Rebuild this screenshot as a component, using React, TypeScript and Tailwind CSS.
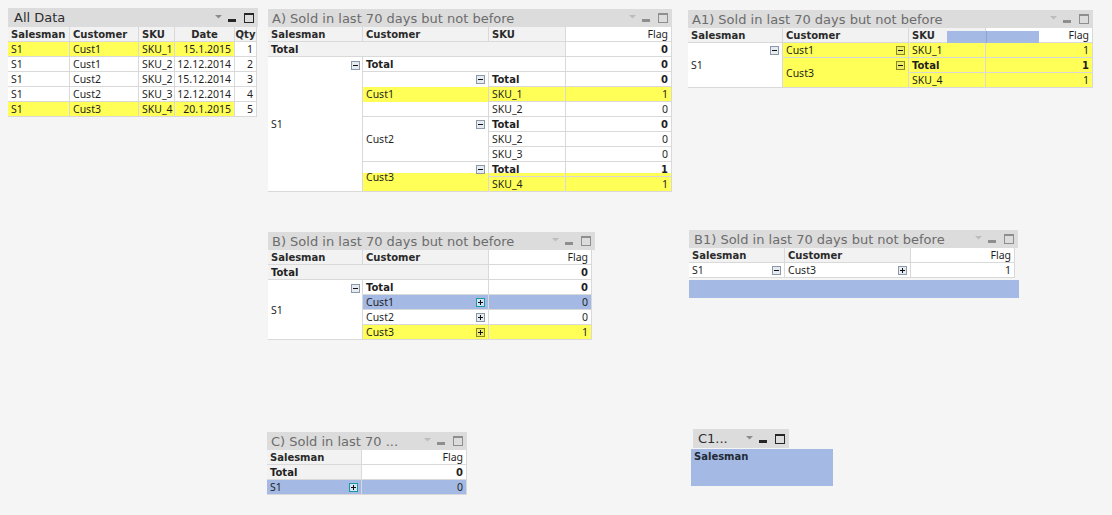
import React from "react";

type Tone = "n" | "t" | "y";

function Toggle({ plus = false, tone = "n" }: { plus?: boolean; tone?: Tone }) {
  const s = tone === "t" ? "#1c98a3" : tone === "y" ? "#8a8a1c" : "#8a98aa";
  const f = tone === "t" ? "#d3e3f3" : tone === "y" ? "#ecec6a" : "#e6ebf1";
  return (
    <svg width="9" height="9" viewBox="0 0 9 9" className="shrink-0">
      <rect x="0.5" y="0.5" width="8" height="8" fill={f} stroke={s} />
      <path d="M2 4.5H7" stroke="#111" />
      {plus && <path d="M4.5 2V7" stroke="#111" />}
    </svg>
  );
}

function CapIcons({ active = false }: { active?: boolean }) {
  const t = active ? "#8c8c8c" : "#bcbcbc";
  const d = active ? "#262626" : "#8e8e8e";
  return (
    <svg width="40" height="10" viewBox="0 0 40 10" className="shrink-0">
      <path d="M0 2H7L3.5 5.5Z" fill={t} />
      <rect x="13" y="6" width="8" height="3" fill={d} />
      <rect x="29.5" y="0.5" width="9" height="9" fill="none" stroke={d} />
      <rect x="29" y="0" width="10" height="2" fill={d} />
    </svg>
  );
}

function Caption({ title, active = false, className = "" }: { title: string; active?: boolean; className?: string }) {
  return (
    <div className={`flex items-center bg-[#dcdcdc] pr-[3px] ${className}`}>
      <span className={`text-[13px] leading-none whitespace-nowrap ${active ? "text-[#2e2e2e]" : "text-[#6c6c6c]"}`}>{title}</span>
      <div className="flex-1" />
      <CapIcons active={active} />
    </div>
  );
}

const REG = "font-['Noto_Sans',sans-serif] text-[10.5px] font-normal";
const BOLD = "font-['DejaVu_Sans',sans-serif] text-[10px] font-bold";

function C({
  children,
  h = false,
  b = false,
  r = false,
  c = false,
  className = "",
}: {
  children?: React.ReactNode;
  h?: boolean;
  b?: boolean;
  r?: boolean;
  c?: boolean;
  className?: string;
}) {
  return (
    <div
      className={`border-r border-b border-[#d9d9d9] px-[3px] pt-[1px] flex items-center whitespace-nowrap overflow-hidden leading-[13px] ${
        h || b ? BOLD : REG
      } ${h ? "bg-[#f2f2f2] text-[#2a2a2a]" : "text-[#1f1f1f]"} ${r ? "justify-end" : c ? "justify-center" : ""} ${className}`}
    >
      {children}
    </div>
  );
}

const Y = "bg-[#ffff58]";
const W = "bg-white";
const BL = "bg-[#a4b9e3]";
const GRAD = "bg-[linear-gradient(to_bottom,#fff_11px,#ffff58_11px)]";

function AllData() {
  const rows: [string, string, string, string, string, boolean][] = [
    ["S1", "Cust1", "SKU_1", "15.1.2015", "1", true],
    ["S1", "Cust1", "SKU_2", "12.12.2014", "2", false],
    ["S1", "Cust2", "SKU_2", "15.12.2014", "3", false],
    ["S1", "Cust2", "SKU_3", "12.12.2014", "4", false],
    ["S1", "Cust3", "SKU_4", "20.1.2015", "5", true],
  ];
  return (
    <div className="absolute left-[8px] top-[8px] w-[250px]">
      <Caption title="All Data" active className="h-[19px] pl-[6px]" />
      <div className="grid grid-cols-[62px_69px_36px_60px_22px] auto-rows-[15px]">
        <C h>Salesman</C>
        <C h>Customer</C>
        <C h className="px-[2px]">SKU</C>
        <C h c>Date</C>
        <C h c className="px-0">Qty</C>
        {rows.map((rw, i) => (
          <React.Fragment key={i}>
            <C className={rw[5] ? Y : W}>{rw[0]}</C>
            <C className={rw[5] ? Y : W}>{rw[1]}</C>
            <C className={`px-[2px] ${rw[5] ? Y : W}`}>{rw[2]}</C>
            <C r className={`px-[2px] ${rw[5] ? Y : W}`}>{rw[3]}</C>
            <C r className={`px-[2px] ${W}`}>{rw[4]}</C>
          </React.Fragment>
        ))}
      </div>
    </div>
  );
}

function TableA() {
  return (
    <div className="absolute left-[268px] top-[9px] w-[404px]">
      <Caption title="A) Sold in last 70 days but not before" className="h-[18px] pl-[4px]" />
      <div className="grid grid-cols-[95px_126px_77px_106px] grid-rows-[repeat(11,15px)]">
        <C h>Salesman</C>
        <C h>Customer</C>
        <C h>SKU</C>
        <C r className={W}>Flag</C>

        <C b className="col-span-3 bg-[#f2f2f2]">Total</C>
        <C b r className={W}>0</C>

        <C className={`row-span-9 relative ${W}`}>
          <span className="absolute right-[2px] top-[4px] flex">
            <Toggle />
          </span>
          S1
        </C>
        <C b className={`col-span-2 ${W}`}>Total</C>
        <C b r className={W}>0</C>

        <div className={`row-span-3 flex flex-col border-r border-b border-[#d9d9d9] text-[#1f1f1f] ${REG} ${W}`}>
          <div className="h-[15px] flex items-center justify-end pr-[3px]">
            <Toggle />
          </div>
          <div className={`h-[15px] flex items-center px-[3px] pt-[1px] ${Y}`}>Cust1</div>
          <div className="flex-1" />
        </div>
        <C b className={W}>Total</C>
        <C b r className={W}>0</C>
        <C className={Y}>SKU_1</C>
        <C r className={Y}>1</C>
        <C className={W}>SKU_2</C>
        <C r className={W}>0</C>

        <C className={`row-span-3 relative ${W}`}>
          <span className="absolute right-[3px] top-[3px] flex">
            <Toggle />
          </span>
          Cust2
        </C>
        <C b className={W}>Total</C>
        <C b r className={W}>0</C>
        <C className={W}>SKU_2</C>
        <C r className={W}>0</C>
        <C className={W}>SKU_3</C>
        <C r className={W}>0</C>

        <C className={`row-span-2 relative ${GRAD}`}>
          <span className="absolute right-[3px] top-[3px] flex">
            <Toggle />
          </span>
          Cust3
        </C>
        <C b className={GRAD}>Total</C>
        <C b r className={GRAD}>1</C>
        <C className={Y}>SKU_4</C>
        <C r className={Y}>1</C>
      </div>
    </div>
  );
}

function TableA1() {
  return (
    <div className="absolute left-[688px] top-[10px] w-[405px]">
      <Caption title="A1) Sold in last 70 days but not before" className="h-[18px] pl-[4px]" />
      <div className="relative grid grid-cols-[95px_126px_77px_107px] grid-rows-[repeat(4,15px)]">
        <C h>Salesman</C>
        <C h>Customer</C>
        <C h>SKU</C>
        <C r className={W}>Flag</C>

        <C className={`row-span-3 relative ${W}`}>
          <span className="absolute right-[3px] top-[3px] flex">
            <Toggle />
          </span>
          S1
        </C>
        <C className={`justify-between ${Y}`}>
          Cust1
          <Toggle tone="y" />
        </C>
        <C className={Y}>SKU_1</C>
        <C r className={Y}>1</C>

        <C className={`row-span-2 relative ${Y}`}>
          <span className="absolute right-[3px] top-[3px] flex">
            <Toggle tone="y" />
          </span>
          Cust3
        </C>
        <C b className={Y}>Total</C>
        <C b r className={Y}>1</C>
        <C className={Y}>SKU_4</C>
        <C r className={Y}>1</C>

        <div className={`absolute left-[259px] top-[3px] w-[92px] h-[12px] ${BL}`}>
          <div className="absolute left-[39px] top-0 w-[1px] h-full bg-[#8ea3cf]" />
        </div>
      </div>
    </div>
  );
}

function TableB() {
  return (
    <div className="absolute left-[268px] top-[232px] w-[327px]">
      <Caption title="B) Sold in last 70 days but not before" className="h-[18px] pl-[4px]" />
      <div className="grid grid-cols-[95px_126px_103px] grid-rows-[repeat(6,15px)]">
        <C h>Salesman</C>
        <C h>Customer</C>
        <C r className={W}>Flag</C>

        <C b className="col-span-2 bg-[#f2f2f2]">Total</C>
        <C b r className={W}>0</C>

        <C className={`row-span-4 relative ${W}`}>
          <span className="absolute right-[2px] top-[4px] flex">
            <Toggle />
          </span>
          S1
        </C>
        <C b className={W}>Total</C>
        <C b r className={W}>0</C>
        <C className={`justify-between ${BL}`}>
          Cust1
          <Toggle plus tone="t" />
        </C>
        <C r className={BL}>0</C>
        <C className={`justify-between ${W}`}>
          Cust2
          <Toggle plus />
        </C>
        <C r className={W}>0</C>
        <C className={`justify-between ${Y}`}>
          Cust3
          <Toggle plus tone="y" />
        </C>
        <C r className={Y}>1</C>
      </div>
    </div>
  );
}

function TableB1() {
  return (
    <div className="absolute left-[689px] top-[230px] w-[330px]">
      <Caption title="B1) Sold in last 70 days but not before" className="h-[18px] pl-[5px] w-[329px]" />
      <div className="grid grid-cols-[96px_126px_104px] grid-rows-[repeat(2,15px)]">
        <C h>Salesman</C>
        <C h>Customer</C>
        <C r className={W}>Flag</C>
        <C className={`justify-between ${W}`}>
          S1
          <Toggle />
        </C>
        <C className={`justify-between ${W}`}>
          Cust3
          <Toggle plus />
        </C>
        <C r className={W}>1</C>
      </div>
      <div className={`mt-[2px] h-[18px] w-[330px] ${BL}`} />
    </div>
  );
}

function TableC() {
  return (
    <div className="absolute left-[267px] top-[432px] w-[200px]">
      <Caption title="C) Sold in last 70 ..." className="h-[18px] pl-[4px]" />
      <div className="grid grid-cols-[95px_105px] grid-rows-[repeat(3,15px)]">
        <C h>Salesman</C>
        <C r className={W}>Flag</C>
        <C b className="bg-[#f2f2f2]">Total</C>
        <C b r className={W}>0</C>
        <C className={`justify-between ${BL}`}>
          S1
          <Toggle plus tone="t" />
        </C>
        <C r className={BL}>0</C>
      </div>
    </div>
  );
}

function TableC1() {
  return (
    <div className="absolute left-[691px] top-[429px] w-[142px]">
      <div className="ml-[2px] w-[96px]">
        <Caption title="C1..." active className="h-[19px] pl-[5px]" />
      </div>
      <div className={`mt-[1px] h-[37px] w-[142px] px-[3px] pt-[2px] text-[10px] leading-[11px] font-bold text-[#1f2a36] ${BL}`}>
        Salesman
      </div>
    </div>
  );
}

export default function App() {
  return (
    <div className="relative w-[1112px] h-[515px] overflow-hidden bg-[#f5f5f5] font-['DejaVu_Sans',sans-serif]">
      <AllData />
      <TableA />
      <TableA1 />
      <TableB />
      <TableB1 />
      <TableC />
      <TableC1 />
    </div>
  );
}
